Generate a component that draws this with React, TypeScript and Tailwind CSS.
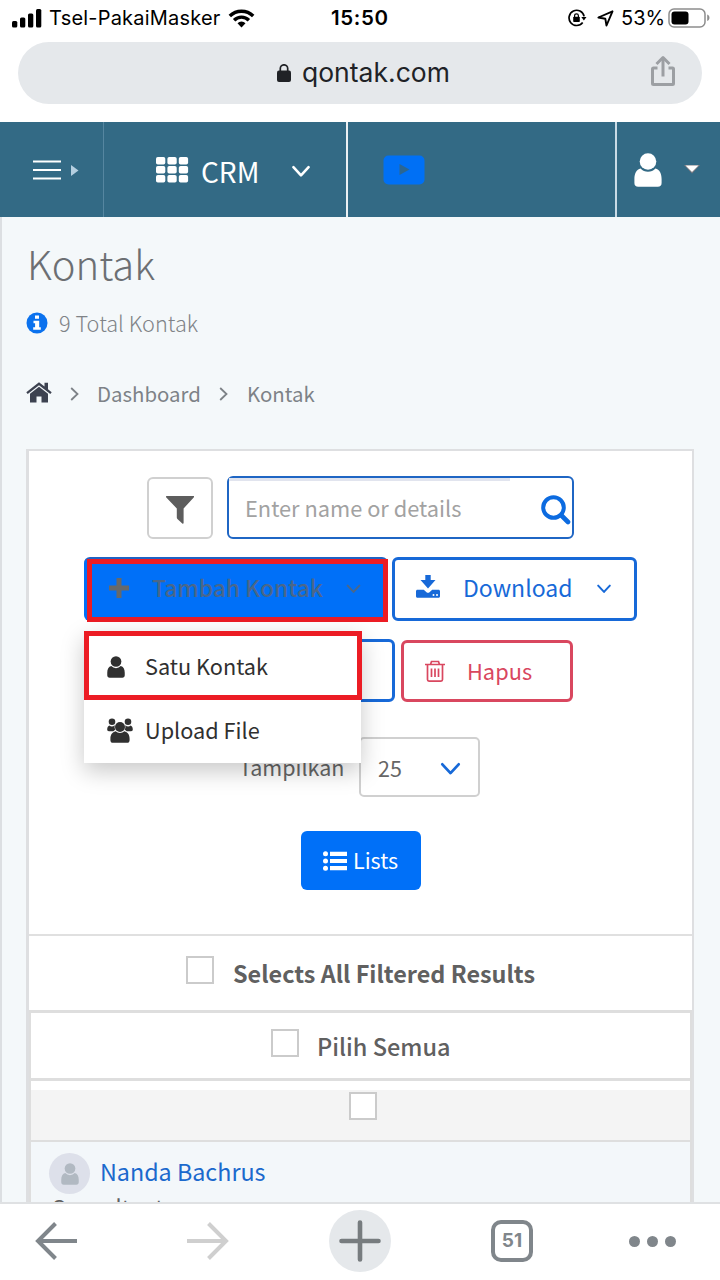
import type { ReactNode } from "react";

const sans = "font-['Noto_Sans_CJK_SC','Open_Sans',sans-serif]";

function Chevron({ className, width = 2 }: { className: string; width?: number }) {
  return (
    <svg viewBox="0 0 18 12" className={className} fill="none" stroke="currentColor" strokeWidth={width} strokeLinecap="round" strokeLinejoin="round">
      <path d="M2 2 L9 9.5 L16 2" />
    </svg>
  );
}

function Person({ className }: { className: string }) {
  return (
    <svg viewBox="0 0 28 34" className={className} fill="currentColor">
      <circle cx="14" cy="8.5" r="8.3" />
      <path d="M6.6 15.6C2.5 16.8.4 20.5.4 26v4c0 2.5 1.4 3.8 3.8 3.8h19.6c2.4 0 3.8-1.3 3.8-3.8v-4c0-5.500-2.100-9.200-6.200-10.400a10.200 10.200 0 0 1-14.800 0z" />
    </svg>
  );
}

function People({ className }: { className: string }) {
  return (
    <svg viewBox="0 0 26 25" className={className} fill="currentColor">
      <circle cx="5" cy="3.700" r="3.300" />
      <circle cx="21" cy="3.700" r="3.300" />
      <path d="M2.300 7.600C.8 8.300.2 9.800.2 11.500c0 1.200.7 1.700 1.700 1.700h4.500c.7-.7 1.500-1.200 2-1.400A6.500 6.500 0 0 1 7.700 7.300a4.500 4.500 0 0 1-5.400.3zM23.700 7.600c1.500.7 2.100 2.200 2.100 3.900 0 1.200-.7 1.700-1.700 1.700h-4.500c-.7-.7-1.500-1.200-2-1.400a6.500 6.500 0 0 0 .7-4.500 4.500 4.500 0 0 0 5.400.3z" />
      <circle cx="13" cy="9" r="5" />
      <path d="M8.600 13.200c-3.300.8-5.200 3.600-5.200 7.500v1.500c0 1.600 1 2.600 2.600 2.600h14c1.600 0 2.600-1 2.600-2.600v-1.500c0-3.900-1.900-6.700-5.200-7.500a6.200 6.200 0 0 1-8.800 0z" />
    </svg>
  );
}

function StatusBar() {
  return (
    <div className="flex h-9 shrink-0 items-center pl-3 font-['Inter',sans-serif] text-[20px] text-black">
      <svg viewBox="0 0 30 19" className="h-[19px] w-[30px]">
        <rect x="0" y="12" width="5.300" height="6.500" rx="1.500" />
        <rect x="8" y="8.500" width="5.300" height="10" rx="1.500" />
        <rect x="16" y="4.500" width="5.300" height="14" rx="1.500" />
        <rect x="24" y="0" width="5.300" height="18.500" rx="1.500" />
      </svg>
      <span className="ml-[7px] w-[179px] whitespace-nowrap tracking-[0.2px]">Tsel-PakaiMasker</span>
      <svg viewBox="0 0 26 19" className="h-[19px] w-[27px]" fill="none" stroke="black" strokeWidth="3.400">
        <path d="M1.300 7 A16.600 16.600 0 0 1 24.700 7" />
        <path d="M5.600 11.200 A10.500 10.500 0 0 1 20.400 11.200" />
        <path d="M9 14.300 A5.600 5.600 0 0 1 17 14.300 L13 18.500 Z" fill="black" stroke="none" />
      </svg>
      <span className="ml-[76px] w-[237px] text-[20.500px] font-semibold tracking-[0.6px] whitespace-nowrap">15:50</span>
      <svg viewBox="0 0 19 18" className="h-[18px] w-[19px]" fill="none" stroke="black" strokeWidth="1.700">
        <path d="M14.700 13.500A7.600 7.600 0 1 1 16.100 7.400" />
        <path d="M13.300 8h5.200l-2.600 3.600z" fill="black" stroke="none" />
        <rect x="5.200" y="7.800" width="6.600" height="5.200" rx=".8" fill="black" stroke="none" />
        <path d="M6.600 8.200V6.800a1.900 1.900 0 0 1 3.800 0v1.400" strokeWidth="1.200" />
      </svg>
      <svg viewBox="0 0 17 17" className="ml-[10px] h-[17px] w-[17px]" fill="none" stroke="black" strokeWidth="1.900" strokeLinejoin="round">
        <path d="M15.500 1.300 L1.400 7.500 L8.300 8.700 L9.500 15.500 Z" />
      </svg>
      <span className="ml-[7px] w-[47px] whitespace-nowrap">53%</span>
      <svg viewBox="0 0 43 20" className="h-5 w-[43px]">
        <rect x="1" y="1" width="36" height="18" rx="5" fill="none" stroke="#8d8d8d" strokeWidth="1.500" />
        <rect x="3.500" y="3.500" width="17" height="13" rx="3" />
        <path d="M39.200 6.500v6.500c3-1.200 3-5.300 0-6.500z" fill="#8d8d8d" />
      </svg>
    </div>
  );
}

function AddressBar() {
  return (
    <div className="mx-[18px] mt-[6px] flex h-[62px] shrink-0 items-center rounded-full bg-[#e5e8eb] pr-[26px] pl-[259px] text-[#202226]">
      <svg viewBox="0 0 14 18" className="h-[18px] w-[14px]">
        <rect x="0" y="6.500" width="14" height="11.500" rx="2" fill="currentColor" />
        <path d="M3.300 8V4.500a3.700 3.700 0 0 1 7.400 0V8" fill="none" stroke="currentColor" strokeWidth="1.700" />
      </svg>
      <span className="mb-[2px] ml-[11px] grow font-['Inter',sans-serif] text-[26.500px] leading-[40px] whitespace-nowrap">qontak.com</span>
      <svg viewBox="0 0 26 32" className="mb-1 h-8 w-[26px]" fill="none" stroke="#9c9fa3" strokeWidth="3" strokeLinejoin="round">
        <path d="M7.500 13H3.500Q2.500 13 2.500 14V28.500Q2.500 29.500 3.500 29.500H22.500Q23.500 29.500 23.500 28.500V14Q23.500 13 22.500 13H18.500" />
        <path d="M13 21.500V3" />
        <path d="M6.500 9L13 2.500L19.500 9" />
      </svg>
    </div>
  );
}

function Navbar() {
  return (
    <header className={`mt-[18px] flex h-[95px] shrink-0 bg-[#336a85] text-white ${sans}`}>
      <div className="flex w-[104px] items-center border-r border-[#5686a0] pl-[33px]">
        <svg viewBox="0 0 46 20" className="h-5 w-[46px]">
          <path d="M0 1.500h28M0 10h28M0 18.500h28" stroke="white" strokeWidth="1.800" />
          <path d="M38 5v11l7.500-5.500z" fill="#b5cfe0" />
        </svg>
      </div>
      <div className="flex w-[244px] items-center border-r-2 border-white/90 pl-[52px]">
        <svg viewBox="0 0 33 26" className="h-[26px] w-[33px]" fill="white">
          {[0, 11.4, 22.8].map((x) =>
            [0, 9, 18].map((y) => <rect key={`${x}-${y}`} x={x} y={y} width="9.300" height="7.500" rx="1.800" />)
          )}
        </svg>
        <span className="ml-[12px] w-[90px] pt-[3px] text-[28px] leading-[40px] whitespace-nowrap">CRM</span>
        <Chevron className="mt-1 h-[13px] w-5" width={2.4} />
      </div>
      <div className="flex w-[269px] items-center border-r-2 border-[#c9dbe6] pl-[35px]">
        <svg viewBox="0 0 42 30" className="h-[30px] w-[42px]">
          <rect x=".5" y=".5" width="41" height="29" rx="5" fill="#0070f5" />
          <path d="M16.500 9v11l10-5.500z" fill="#2b6691" />
        </svg>
      </div>
      <div className="flex items-center pl-[17px]">
        <Person className="h-[34px] w-7" />
        <svg viewBox="0 0 16 9" className="ml-[22px] h-[9px] w-4">
          <path d="M0 0h16L8 8.500z" fill="#7d7a80" />
          <path d="M1.500 .5h13L8 7z" fill="white" />
        </svg>
      </div>
    </header>
  );
}

function Checkbox() {
  return <span className="h-7 w-7 shrink-0 border-2 border-[#cbcbcb] bg-white" />;
}

function MenuItem({ icon, children }: { icon: ReactNode; children: ReactNode }) {
  return (
    <div className="flex items-center">
      <span className="w-[38px]">{icon}</span>
      <span className="mb-1 whitespace-nowrap">{children}</span>
    </div>
  );
}

function AddContactMenu() {
  return (
    <div className="absolute top-[72px] left-0 z-10 w-[277px] bg-white text-[21.700px] leading-[32px] text-[#303030] shadow-[0_8px_22px_rgba(0,0,0,0.22)]">
      <div className="flex h-[69px] w-[278px] items-center border-5 border-[#ec1c24] pt-[5px] pl-[18px]">
        <MenuItem icon={<Person className="mb-[2px] h-[22px] w-[18px]" />}>Satu Kontak</MenuItem>
      </div>
      <div className="flex h-[63px] items-center pl-[23px]">
        <MenuItem icon={<People className="mb-[3px] h-[25px] w-[26px]" />}>Upload File</MenuItem>
      </div>
    </div>
  );
}

function Toolbar() {
  return (
    <>
      <div className="ml-[118px] flex h-[63px] text-[21.800px]">
        <div className="mt-px mr-[14px] flex w-[66px] items-center justify-center rounded-[6px] border-2 border-[#d0d0d0] pt-[3px]">
          <svg viewBox="0 0 28 28" className="h-7 w-7">
            <path d="M.5 0h27c.8 0 .7 1 .2 1.600L17.600 12.500V27c0 .8-.7 1-1.300.6L11.400 23c-.4-.4-.6-.8-.6-1.400v-9L.3 1.600C-.2 1-.1 0 .5 0z" fill="#5d5d5d" />
          </svg>
        </div>
        <div className="relative flex w-[347px] items-center rounded-[6px] border-2 border-[#1f66c4] pl-4">
          <span className="absolute top-0 left-0 h-[3px] w-[281px] bg-[#e1e4ee]" />
          <span className="w-[296px] leading-8 whitespace-nowrap text-[#a2a2a2]">Enter name or details</span>
          <svg viewBox="0 0 30 30" className="mt-1 h-[30px] w-[30px] shrink-0" fill="none" stroke="#0c6be0" strokeLinecap="round">
            <circle cx="12.500" cy="12.500" r="10.300" strokeWidth="4" />
            <path d="M20.500 20.500L27 27" strokeWidth="4.600" />
          </svg>
        </div>
      </div>

      <div className="mt-[18px] ml-[55px] flex h-16 text-[23px]">
        <div className="relative mr-1 w-[304px] rounded-[6px] border-t-2 border-[#1f62c4] bg-[#0070f8] pl-[3px]">
          <div className="flex h-[63px] w-[301px] items-center border-5 border-[#ec1c24] pl-[16px] text-[22.800px] font-medium text-[#4a678a]">
            <svg viewBox="0 0 22 22" className="mb-[5px] h-[22px] w-[22px]">
              <path d="M11 1v20M1 11h20" stroke="#66696b" strokeWidth="5" />
            </svg>
            <span className="ml-[22px] w-[194px] pb-[6px] leading-8 whitespace-nowrap">Tambah Kontak</span>
            <Chevron className="mb-1 h-[10px] w-[15px]" width={2.4} />
          </div>
          <AddContactMenu />
        </div>
        <div className="flex w-[245px] items-center rounded-[6px] border-3 border-[#1769d8] pl-[21px] text-[#1769d8]">
          <svg viewBox="0 0 24 23" className="mb-[5px] h-[23px] w-6 shrink-0" fill="currentColor">
            <path d="M9.300 0h5.400v5h4.800L12 13.500 4.500 5h4.800zM1.500 14.800h6.300l2.700 2.400c.9.800 2.100.8 3 0l2.700-2.400h6.300c.9 0 1.500.6 1.500 1.500v5c0 .9-.6 1.500-1.500 1.500h-21C.6 22.800 0 22.200 0 21.300v-5c0-.9.6-1.500 1.500-1.500z" />
            <circle cx="17.500" cy="20" r="1" fill="white" />
            <circle cx="21" cy="20" r="1" fill="white" />
          </svg>
          <span className="ml-[23px] w-[133px] pb-1 leading-8 whitespace-nowrap">Download</span>
          <Chevron className="h-[10px] w-[16px]" width={2.4} />
        </div>
      </div>

      <div className="mt-[18px] ml-[55px] flex h-[63px]">
        <div className="mr-[6px] w-[311px] rounded-[6px] border-3 border-[#1769d8]" />
        <div className="mt-px flex w-[172px] items-center rounded-[6px] border-3 border-[#d9475f] pl-[21px] text-[21.800px] text-[#d9475f]">
          <svg viewBox="0 0 20 22" className="h-[22px] w-5" fill="none" stroke="currentColor" strokeWidth="1.700">
            <path d="M0 4.500h20M5.500 4.500l1-3h7l1 3M2.500 4.500v15c0 1 .5 1.600 1.500 1.600h12c1 0 1.500-.6 1.500-1.600v-15M6.500 8.500v8.500M10 8.500v8.500M13.500 8.500v8.500" />
          </svg>
          <span className="ml-[22px] leading-8 whitespace-nowrap">Hapus</span>
        </div>
      </div>

      <div className="mt-[35px] ml-[210px] flex h-[60px] items-center text-[21.500px] text-[#666]">
        <span className="w-[120px] pb-px leading-8 whitespace-nowrap">Tampilkan</span>
        <div className="flex h-full w-[121px] items-center rounded-[5px] border-2 border-[#d0d0d0] bg-white pl-[17px]">
          <span className="w-[62px] pt-[2px] leading-8">25</span>
          <Chevron className="mt-1 h-[14px] w-[21px] text-[#1769d8]" width={2.4} />
        </div>
      </div>

      <div className="mt-[34px] ml-[272px] flex h-[59px] w-[120px] items-center rounded-[6px] bg-[#0070f8] pl-[22px] text-[21.500px] text-white">
        <svg viewBox="0 0 24 20" className="h-5 w-6" fill="white">
          <circle cx="2.500" cy="2.800" r="2.500" />
          <circle cx="2.500" cy="10" r="2.500" />
          <circle cx="2.500" cy="17.200" r="2.500" />
          <path d="M7 .7h17v4.200H7zM7 7.900h17v4.200H7zM7 15.100h17v4.200H7z" />
        </svg>
        <span className="mb-px ml-[6px] leading-8">Lists</span>
      </div>
    </>
  );
}

function ContactTable() {
  return (
    <>
      <div className="mt-11 flex h-[76px] border-t-2 border-[#e0e0e0] pt-5 pl-[157px] text-[23.400px] font-bold text-[#606060]">
        <Checkbox />
        <span className="mt-px ml-[19px] leading-8 whitespace-nowrap">Selects All Filtered Results</span>
      </div>
      <div className="border-x-2 border-[#dedede]">
        <div className="flex h-[71px] border-y-3 border-[#dedede] pt-4 pl-[240px] text-[23.500px] font-medium text-[#606060]">
          <Checkbox />
          <span className="mt-px ml-[18px] leading-8 whitespace-nowrap">Pilih Semua</span>
        </div>
        <div className="mt-[9px] flex h-[52px] border-b-2 border-[#dedede] bg-[#f4f4f4] pt-[2px] pl-[318px]">
          <Checkbox />
        </div>
        <div className="h-[80px] bg-[#f3f7fa] pt-[11px] pl-[18px]">
          <div className="flex items-center">
            <span className="flex h-[41px] w-[41px] items-center justify-center rounded-full bg-[#dde0ea] text-[#b1b9c2]">
              <Person className="h-[22px] w-[18px]" />
            </span>
            <span className="mb-[5px] ml-[10px] text-[23.300px] leading-8 whitespace-nowrap text-[#1b69cd]">Nanda Bachrus</span>
          </div>
          <div className="ml-[2px] text-[22px] leading-[24px] text-[#606060]">Consultant</div>
        </div>
      </div>
    </>
  );
}

function BottomBar() {
  return (
    <footer className="flex h-[78px] shrink-0 items-center border-t-2 border-[#dfe1e3] bg-white pb-[2px] pl-[35px]">
      <svg viewBox="0 0 42 38" className="h-[38px] w-[42px]" fill="none" stroke="#80868b" strokeWidth="4">
        <path d="M42 19H3M20.500 1.500L3 19L20.500 36.500" />
      </svg>
      <svg viewBox="0 0 42 38" className="ml-[110px] h-[38px] w-[42px]" fill="none" stroke="#cfcfcf" strokeWidth="4">
        <path d="M0 19H39M21.500 1.500L39 19L21.500 36.500" />
      </svg>
      <span className="ml-[100px] flex h-[62px] w-[62px] items-center justify-center rounded-full bg-[#e5e8eb]">
        <svg viewBox="0 0 42 42" className="h-[42px] w-[42px]" stroke="#777c7f" strokeWidth="4.600" strokeLinecap="round">
          <path d="M21 2.500V39.500M2.500 21H39.500" />
        </svg>
      </span>
      <span className="ml-[100px] flex h-[42px] w-[42px] items-center justify-center rounded-[10px] border-4 border-[#80868b] font-['Inter',sans-serif] text-[19px] font-bold text-[#80868b]">51</span>
      <span className="ml-[96px] flex gap-[7px]">
        <span className="h-[11px] w-[11px] rounded-full bg-[#80868b]" />
        <span className="h-[11px] w-[11px] rounded-full bg-[#80868b]" />
        <span className="h-[11px] w-[11px] rounded-full bg-[#80868b]" />
      </span>
    </footer>
  );
}

export default function App() {
  return (
    <div className="flex h-[1280px] w-[720px] flex-col overflow-hidden bg-white">
      <StatusBar />
      <AddressBar />
      <Navbar />
      <main className={`h-[985px] shrink-0 overflow-hidden border-l-2 border-[#dcdfe2] bg-[#f4f8fa] ${sans}`}>
        <h1 className="mt-[21px] ml-[25px] text-[40px] leading-[50px] font-light text-[#6c6f73]">Kontak</h1>
        <div className="mt-5 ml-6 flex h-[30px] items-center text-[21.700px] leading-[30px] font-light text-[#7f8387]">
          <svg viewBox="0 0 22 22" className="h-[22px] w-[22px]">
            <circle cx="11" cy="11" r="10.500" fill="#0b72ee" />
            <path d="M9 3.500h4v3.300H9zM7.500 8.700h5.700v6.500h1.600v2.500H7.200v-2.500h1.900v-4H7.500z" fill="white" />
          </svg>
          <span className="ml-[11px] whitespace-nowrap">9 Total Kontak</span>
        </div>
        <div className="mt-10 ml-6 flex h-[30px] items-center text-[20.400px] leading-[30px] text-[#7d8287]">
          <svg viewBox="0 0 26 21" className="mb-[2px] h-[21px] w-[26px]" fill="#3d4250">
            <path d="M13 .3L.3 10.300l1.400 1.700L13 3.200 24.300 12l1.400-1.700-3.700-3V.8h-3.500v3.700z" />
            <path d="M4 11.700L13 4.800l9 6.900V20.500h-6.500v-6h-5v6H4z" />
          </svg>
          <svg viewBox="0 0 9 14" className="mt-px ml-[18px] h-[14px] w-[9px]" fill="none" stroke="currentColor" strokeWidth="1.800">
            <path d="M1.200 1L7.500 7L1.200 13" />
          </svg>
          <span className="ml-[18px] w-[105px]">Dashboard</span>
          <svg viewBox="0 0 9 14" className="mt-px ml-[17px] h-[14px] w-[9px]" fill="none" stroke="currentColor" strokeWidth="1.800">
            <path d="M1.200 1L7.500 7L1.200 13" />
          </svg>
          <span className="ml-[19px]">Kontak</span>
        </div>
        <section className="mt-[41px] mr-[26px] ml-6 h-[800px] border-t-2 border-r-2 border-l-3 border-[#dedfe1] bg-white pt-[25px]">
          <Toolbar />
          <ContactTable />
        </section>
      </main>
      <BottomBar />
    </div>
  );
}
